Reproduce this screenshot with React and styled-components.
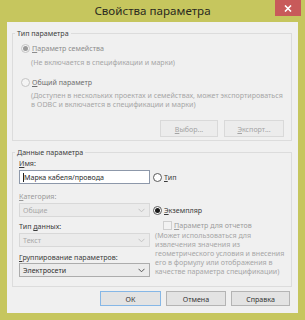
import React from "react";
import styled, { createGlobalStyle } from "styled-components";

const FS = "7.1px";

const Global = createGlobalStyle`
  html, body { margin: 0; padding: 0; background: #c6c65e; }
  body { font-family: "Noto Sans", "Open Sans", sans-serif; }
  * { box-sizing: border-box; }
`;

const Window = styled.div`
  width: 305px;
  height: 320px;
  background: #c6c65e;
  display: flex;
  flex-direction: column;
  padding: 0 7px 7px 7px;
`;

const TitleBar = styled.div`
  height: 22px;
  margin: 0 -7px;
  display: grid;
  grid-template-columns: 1fr auto 1fr;
  align-items: start;
`;

const Title = styled.div`
  grid-column: 2;
  font-size: 11.6px;
  line-height: 22px;
  color: #2a2a20;
  white-space: nowrap;
`;

const CloseBtn = styled.div`
  grid-column: 3;
  justify-self: end;
  margin-right: 4px;
  width: 26px;
  height: 16px;
  background: #c85a5a;
  display: flex;
  align-items: center;
  justify-content: center;
`;

const Client = styled.div`
  flex: 1;
  background: #f0f0f0;
  padding: 6px 6px 0 5px;
  display: flex;
  flex-direction: column;
`;

const Group = styled.fieldset`
  margin: ${(p) => p.$mt || 0}px 0 0 0;
  border: 1px solid #dcdcdc;
  padding: ${(p) => p.$pad};
  min-width: 0;
`;

const Legend = styled.legend`
  font-size: ${FS};
  line-height: 10px;
  color: #3c3c3c;
  padding: 0 2px;
  margin-left: ${(p) => p.$ml}px;
`;

const Row = styled.div`
  display: flex;
  align-items: center;
  height: ${(p) => p.$h || 10}px;
  margin-top: ${(p) => p.$mt || 0}px;
`;

const RadioCircle = styled.span`
  width: 9px;
  height: 9px;
  border-radius: 50%;
  border: 1px solid ${(p) => (p.$disabled ? "#c4c4c4" : "#5a5a5a")};
  background: ${(p) => (p.$disabled ? "#f4f4f4" : "#ffffff")};
  display: flex;
  align-items: center;
  justify-content: center;
  flex: none;
  margin-right: 2px;
  &::after {
    content: "";
    display: ${(p) => (p.$checked ? "block" : "none")};
    width: 5px;
    height: 5px;
    border-radius: 50%;
    background: ${(p) => (p.$disabled ? "#9a9a9a" : "#1a1a1a")};
  }
`;

const CheckBox = styled.span`
  width: 9px;
  height: 9px;
  border: 1px solid #cfcfcf;
  background: #f2f2f2;
  flex: none;
  margin-right: 2px;
`;

const Text = styled.span`
  font-size: ${FS};
  line-height: 10px;
  white-space: nowrap;
  color: ${(p) => p.$color || "#3a3a3a"};
`;

const U = styled.span`
  text-decoration: underline;
  text-underline-offset: 1px;
`;

const Desc = styled.div`
  font-size: ${FS};
  line-height: ${(p) => p.$lh || 9}px;
  color: #a6a6a6;
  margin: ${(p) => p.$m || "0"};
  white-space: nowrap;
`;

const BtnRow = styled.div`
  display: flex;
  justify-content: flex-end;
  gap: ${(p) => p.$gap}px;
  margin: ${(p) => p.$m};
`;

const Button = styled.div`
  width: ${(p) => p.$w}px;
  height: ${(p) => p.$h}px;
  display: flex;
  align-items: center;
  justify-content: center;
  font-size: ${FS};
  color: ${(p) => (p.$disabled ? "#a4a4a4" : "#333333")};
  background: ${(p) => (p.$disabled ? "#ececec" : "#e3e3e3")};
  border: 1px solid
    ${(p) => (p.$default ? "#86b7e6" : p.$disabled ? "#d9d9d9" : "#b4b4b4")};
`;

const DataGrid = styled.div`
  display: grid;
  grid-template-columns: 131px 1fr;
  column-gap: 3px;
  align-items: start;
`;

const Cell = styled.div`
  grid-column: ${(p) => p.$col};
  grid-row: ${(p) => p.$row};
  margin-top: ${(p) => p.$mt || 0}px;
  margin-left: ${(p) => p.$ml || 0}px;
  display: flex;
  align-items: center;
  height: ${(p) => (p.$h ? `${p.$h}px` : "auto")};
`;

const TextBox = styled.div`
  width: 131px;
  height: 14px;
  background: #ffffff;
  border: 1px solid #8d98aa;
  display: flex;
  align-items: center;
  padding-left: 3px;
  font-size: ${FS};
  color: #2e2e2e;
  white-space: nowrap;
  &::before {
    content: "";
    width: 1px;
    height: 9px;
    background: #202020;
  }
`;

const Select = styled.div`
  width: 131px;
  height: 14px;
  background: #ebebeb;
  border: 1px solid ${(p) => (p.$disabled ? "#d8d8d8" : "#acacac")};
  display: flex;
  align-items: center;
  justify-content: space-between;
  padding: 0 4px 0 3px;
  font-size: ${FS};
  color: ${(p) => (p.$disabled ? "#a8a8a8" : "#2e2e2e")};
  white-space: nowrap;
`;

const Chevron = ({ color }) => (
  <svg width="7" height="5" viewBox="0 0 7 5">
    <path d="M0.5 0.8 L3.5 3.8 L6.5 0.8" fill="none" stroke={color} strokeWidth="1" />
  </svg>
);

export default function App() {
  return (
    <>
      <Global />
      <Window>
        <TitleBar>
          <Title>Свойства параметра</Title>
          <CloseBtn>
            <svg width="8" height="7" viewBox="0 0 8 7">
              <path d="M1 0.5 L7 6.5 M7 0.5 L1 6.5" stroke="#ffffff" strokeWidth="1.6" />
            </svg>
          </CloseBtn>
        </TitleBar>
        <Client>
          <Group $pad="5px 7px 3px 8px">
            <Legend $ml={-6}>Тип параметра</Legend>
            <Row>
              <RadioCircle $checked $disabled />
              <Text $color="#8c8c8c">
                <U>П</U>араметр семейства
              </Text>
            </Row>
            <Desc $m="4px 0 0 10px" $lh={10}>
              (Не включается в спецификации и марки)
            </Desc>
            <Row $mt={10}>
              <RadioCircle $disabled />
              <Text $color="#6e6e6e">
                <U>О</U>бщий параметр
              </Text>
            </Row>
            <Desc $m="4px 0 0 10px">
              (Доступен в нескольких проектах и семействах, может экспортироваться
              <br />в ODBC и включается в спецификации и марки)
            </Desc>
            <BtnRow $gap={6} $m="11px 0 0 0">
              <Button $w={58} $h={17} $disabled>
                <span>
                  <U>В</U>ыбор...
                </span>
              </Button>
              <Button $w={60} $h={17} $disabled>
                <span>
                  <U>Э</U>кспорт...
                </span>
              </Button>
            </BtnRow>
          </Group>

          <Group $mt={6} $pad="1px 6px 9px 6px">
            <Legend $ml={-4}>Данные параметра</Legend>
            <DataGrid>
              <Cell $col={1} $row={1} $h={10}>
                <Text>
                  <U>И</U>мя:
                </Text>
              </Cell>
              <Cell $col={1} $row={2} $mt={2}>
                <TextBox>Марка кабеля/провода</TextBox>
              </Cell>
              <Cell $col={2} $row={2} $mt={2} $h={14}>
                <RadioCircle />
                <Text>
                  <U>Т</U>ип
                </Text>
              </Cell>
              <Cell $col={1} $row={3} $mt={7} $h={10}>
                <Text $color="#9a9a9a">
                  <U>К</U>атегория:
                </Text>
              </Cell>
              <Cell $col={1} $row={4} $mt={2}>
                <Select $disabled>
                  Общие
                  <Chevron color="#c2c2c2" />
                </Select>
              </Cell>
              <Cell $col={2} $row={4} $mt={2} $h={14}>
                <RadioCircle $checked />
                <Text>
                  <U>Э</U>кземпляр
                </Text>
              </Cell>
              <Cell $col={1} $row={5} $mt={4} $h={10}>
                <Text>
                  Тип <U>д</U>анных:
                </Text>
              </Cell>
              <Cell $col={2} $row={5} $mt={3} $ml={10} $h={10}>
                <CheckBox />
                <Text $color="#9c9c9c">
                  <U>П</U>араметр для отчетов
                </Text>
              </Cell>
              <Cell $col={1} $row={6} $mt={2}>
                <Select $disabled>
                  Текст
                  <Chevron color="#c2c2c2" />
                </Select>
              </Cell>
              <Cell $col={2} $row="6 / span 3" $ml={2}>
                <Desc>
                  (Может использоваться для
                  <br />
                  извлечения значения из
                  <br />
                  геометрического условия и внесения
                  <br />
                  его в формулу или отображения в
                  <br />
                  качестве параметра спецификации)
                </Desc>
              </Cell>
              <Cell $col={1} $row={7} $mt={5} $h={10}>
                <Text>
                  <U>Г</U>руппирование параметров:
                </Text>
              </Cell>
              <Cell $col={1} $row={8} $mt={1}>
                <Select>
                  Электросети
                  <Chevron color="#555555" />
                </Select>
              </Cell>
            </DataGrid>
          </Group>

          <BtnRow $gap={5} $m="4px 2px 0 0">
            <Button $w={61} $h={15} $default>
              ОК
            </Button>
            <Button $w={60} $h={15}>
              Отмена
            </Button>
            <Button $w={59} $h={15}>
              Справка
            </Button>
          </BtnRow>
        </Client>
      </Window>
    </>
  );
}
